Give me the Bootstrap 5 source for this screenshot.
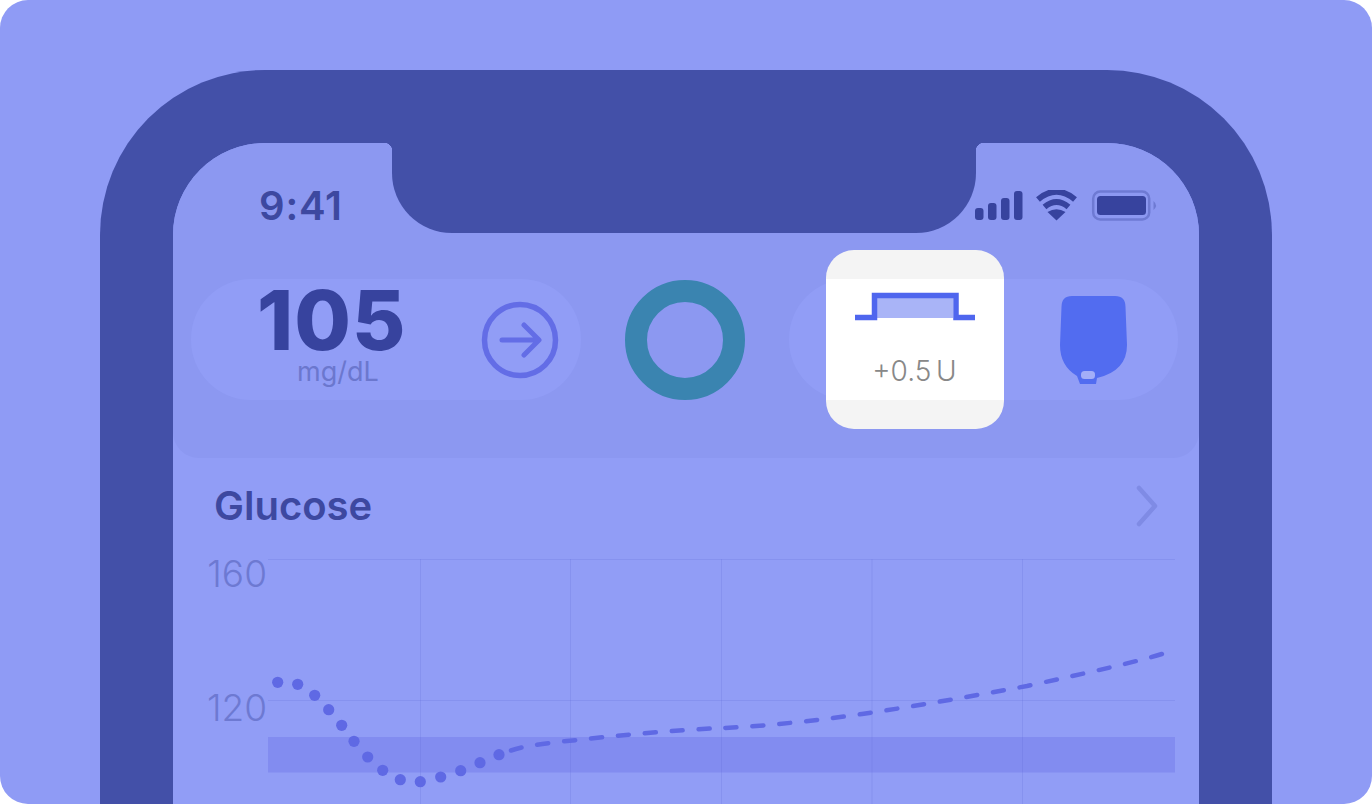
<!DOCTYPE html>
<html lang="en">
<head>
  <meta charset="UTF-8">
  <meta name="viewport" content="width=device-width, initial-scale=1.0">
  <title>Glucose</title>
  <link href="https://cdn.jsdelivr.net/npm/bootstrap@5.3.0/dist/css/bootstrap.min.css" rel="stylesheet">
  <style>
    html, body { background: #fff; overflow: hidden; }
    body { font-family: Inter, "Liberation Sans", sans-serif; }
    .stage { width: 1372px; height: 804px; border-radius: 28px; background: #8f9bf5; padding: 70px 100px 0; overflow: hidden; }
    .bezel { height: 734px; background: #4350a8; border-radius: 165px 165px 0 0; padding: 73px 73px 0; }
    .screen { height: 661px; background: #919df6; border-radius: 92px 92px 0 0; position: relative; overflow: hidden; }
    .notch { position: absolute; left: 219px; top: 0; width: 584px; height: 90px; background: #4350a8; border-radius: 0 0 60px 60px; }
    .notch::before, .notch::after { content: ""; position: absolute; top: 0; width: 8px; height: 8px; }
    .notch::before { left: -8px; background: radial-gradient(circle at 0 100%, transparent 8px, #4350a8 8.5px); }
    .notch::after { right: -8px; background: radial-gradient(circle at 100% 100%, transparent 8px, #4350a8 8.5px); }
    .head-panel { height: 315px; background: #8c98f1; border-radius: 0 0 26px 26px; }
    .status-row { height: 136px; padding: 42px 40px 0 86px; }
    .clock { font-size: 40px; line-height: 42px; font-weight: 600; color: #3d48a0; letter-spacing: .8px; }
    .status-icons { margin-top: 5px; }
    .chip-row { padding: 0 21px 0 18px; gap: 44px; }
    .chip { width: 390px; height: 121px; background: #919df6; border-radius: 60px; }
    .reading { width: 150px; margin: 0 0 3px 66px; }
    .reading-num { font-size: 82px; line-height: 60px; font-weight: 800; color: #37439e; letter-spacing: 1px; }
    .reading-unit { font-size: 27px; line-height: 28px; color: #6b77ce; margin: 7px 0 0 40px; white-space: nowrap; }
    .ring { width: 120px; height: 120px; flex: none; border: 22px solid #3a84b0; border-radius: 50%; }
    .bolus-card { width: 178px; height: 179px; flex: none; margin: -29px 0 -29px 37px; border-radius: 28px; background: linear-gradient(#f4f4f4 29px, #fff 29px, #fff 150px, #f4f4f4 150px); }
    .bolus-amount { font-size: 28px; line-height: 32px; color: #888; font-weight: 300; margin-top: 32px; word-spacing: -3px; }
    .section-title { height: 101px; padding: 0 41px 6px 41px; }
    .section-title h2 { font-size: 40px; font-weight: 600; color: #3d48a0; margin: 0; }
    .axis-col { width: 95px; flex: none; color: #6d79d2; font-size: 37px; font-weight: 300; line-height: 40px; text-align: right; }
    .axis-val { padding-right: 1px; }
  </style>
</head>
<body>
  <div class="stage">
    <div class="bezel">
      <div class="screen">
        <div class="notch"></div>

        <div class="head-panel">
          <div class="status-row d-flex justify-content-between align-items-start">
            <div class="clock">9:41</div>
            <svg class="status-icons d-block" width="184" height="32" viewBox="975 190 184 32">
              <g fill="#37439e">
                <rect x="975" y="208" width="8.500" height="12" rx="3"/>
                <rect x="988" y="203" width="8.500" height="17" rx="3"/>
                <rect x="1001" y="198" width="8.500" height="22" rx="3"/>
                <rect x="1014" y="191" width="8.500" height="29" rx="3"/>
                <path d="M1047.500 212 Q1056.500 206.500 1065.500 212 L1056.500 220.500 Z"/>
                <rect x="1097" y="196" width="49" height="19" rx="3.500"/>
              </g>
              <g fill="none" stroke="#37439e" stroke-width="6">
                <path d="M1038 199.500 Q1056.500 184 1075 199.500"/>
                <path d="M1044.500 207 Q1056.500 197 1068.500 207"/>
              </g>
              <rect x="1093.200" y="191.500" width="56" height="28" rx="7" fill="none" stroke="#6e7ad3" stroke-width="2.500"/>
              <path d="M1153.500 201 Q1158.500 205.500 1153.500 210 Z" fill="#6e7ad3"/>
            </svg>
          </div>

          <div class="chip-row d-flex align-items-center">
            <div class="chip d-flex align-items-center">
              <div class="reading">
                <div class="reading-num">105</div>
                <div class="reading-unit">mg/dL</div>
              </div>
              <svg class="d-block" style="margin-left:74px" width="78" height="78" viewBox="480 302 78 78">
                <circle cx="519" cy="341" r="35.500" fill="none" stroke="#636de6" stroke-width="5.500"/>
                <path d="M501 341 H537 M523 326 L538 341 L523 356" fill="none" stroke="#636de6" stroke-width="5" stroke-linecap="round" stroke-linejoin="round"/>
              </svg>
            </div>

            <div class="ring"></div>

            <div class="chip d-flex align-items-center">
              <div class="bolus-card d-flex flex-column align-items-center">
                <svg class="d-block" style="margin-top:41px" width="122" height="32" viewBox="854 291 122 32">
                  <path d="M877 298 H953 V318 H877 Z" fill="#a9b4f7"/>
                  <path d="M855 317.500 H874.500 V295.500 H956 V317.500 H975" fill="none" stroke="#4f66ee" stroke-width="5.500"/>
                </svg>
                <div class="bolus-amount">+0.5 U</div>
              </div>
              <svg class="d-block" style="margin-left:56px" width="68" height="90" viewBox="1060 295 68 90">
                <path d="M1072 296 H1115 Q1125.500 296 1125.500 307 L1127 345 Q1127 371 1097 378 L1096 384 H1080 L1077 376 Q1060 366 1060 345 L1061.500 307 Q1061.500 296 1072 296 Z" fill="#526cf0"/>
                <rect x="1081" y="371" width="14" height="8" rx="3.500" fill="#a3aef8"/>
              </svg>
            </div>
          </div>
        </div>

        <div class="section-title d-flex justify-content-between align-items-center">
          <h2>Glucose</h2>
          <svg class="d-block" width="22" height="42" viewBox="1135 485 22 42">
            <path d="M1138 488 L1154 506 L1138 524" fill="none" stroke="#7f8be5" stroke-width="4.500" stroke-linecap="round" stroke-linejoin="round"/>
          </svg>
        </div>

        <div class="d-flex">
          <div class="axis-col">
            <div class="axis-val" style="margin-top:-5px">160</div>
            <div class="axis-val" style="margin-top:94px">120</div>
          </div>
          <svg class="d-block flex-shrink-0" width="907" height="250" viewBox="268 559 907 250">
            <rect x="268" y="737" width="907" height="35.500" fill="#828cf0"/>
            <g stroke="#5a66d2" stroke-opacity=".18" stroke-width="1" fill="none">
              <path d="M268 559.500 H1175 M268 700.500 H1175"/>
              <path d="M420.500 559 V809 M570.500 559 V809 M721.500 559 V809 M872 559 V809 M1022.500 559 V809"/>
            </g>
            <g fill="#5f69e4">
              <circle cx="277.700" cy="682.300" r="5.600"/>
              <circle cx="297.700" cy="684.300" r="5.600"/>
              <circle cx="314.700" cy="695.300" r="5.600"/>
              <circle cx="328.700" cy="709.700" r="5.600"/>
              <circle cx="341.700" cy="725.300" r="5.600"/>
              <circle cx="354" cy="741.300" r="5.600"/>
              <circle cx="367.700" cy="757" r="5.600"/>
              <circle cx="382.700" cy="770.300" r="5.600"/>
              <circle cx="400.300" cy="779.700" r="5.600"/>
              <circle cx="420.300" cy="781.700" r="5.600"/>
              <circle cx="440.700" cy="777" r="5.600"/>
              <circle cx="460.700" cy="770.700" r="5.600"/>
              <circle cx="480" cy="762.700" r="5.600"/>
              <circle cx="499" cy="754.700" r="5.600"/>
            </g>
            <path d="M511 750.500 C530 744 560 742 586 739 C641 733 696 729 723 728 C752 727 807 722 862 714 C917 706 972 696 1027 686 C1082 674 1137 662 1165 653" fill="none" stroke="#5f69e4" stroke-width="4.500" stroke-linecap="round" stroke-dasharray="11 16"/>
          </svg>
        </div>
      </div>
    </div>
  </div>
  <script src="https://cdn.jsdelivr.net/npm/bootstrap@5.3.0/dist/js/bootstrap.bundle.min.js"></script>
</body>
</html>
